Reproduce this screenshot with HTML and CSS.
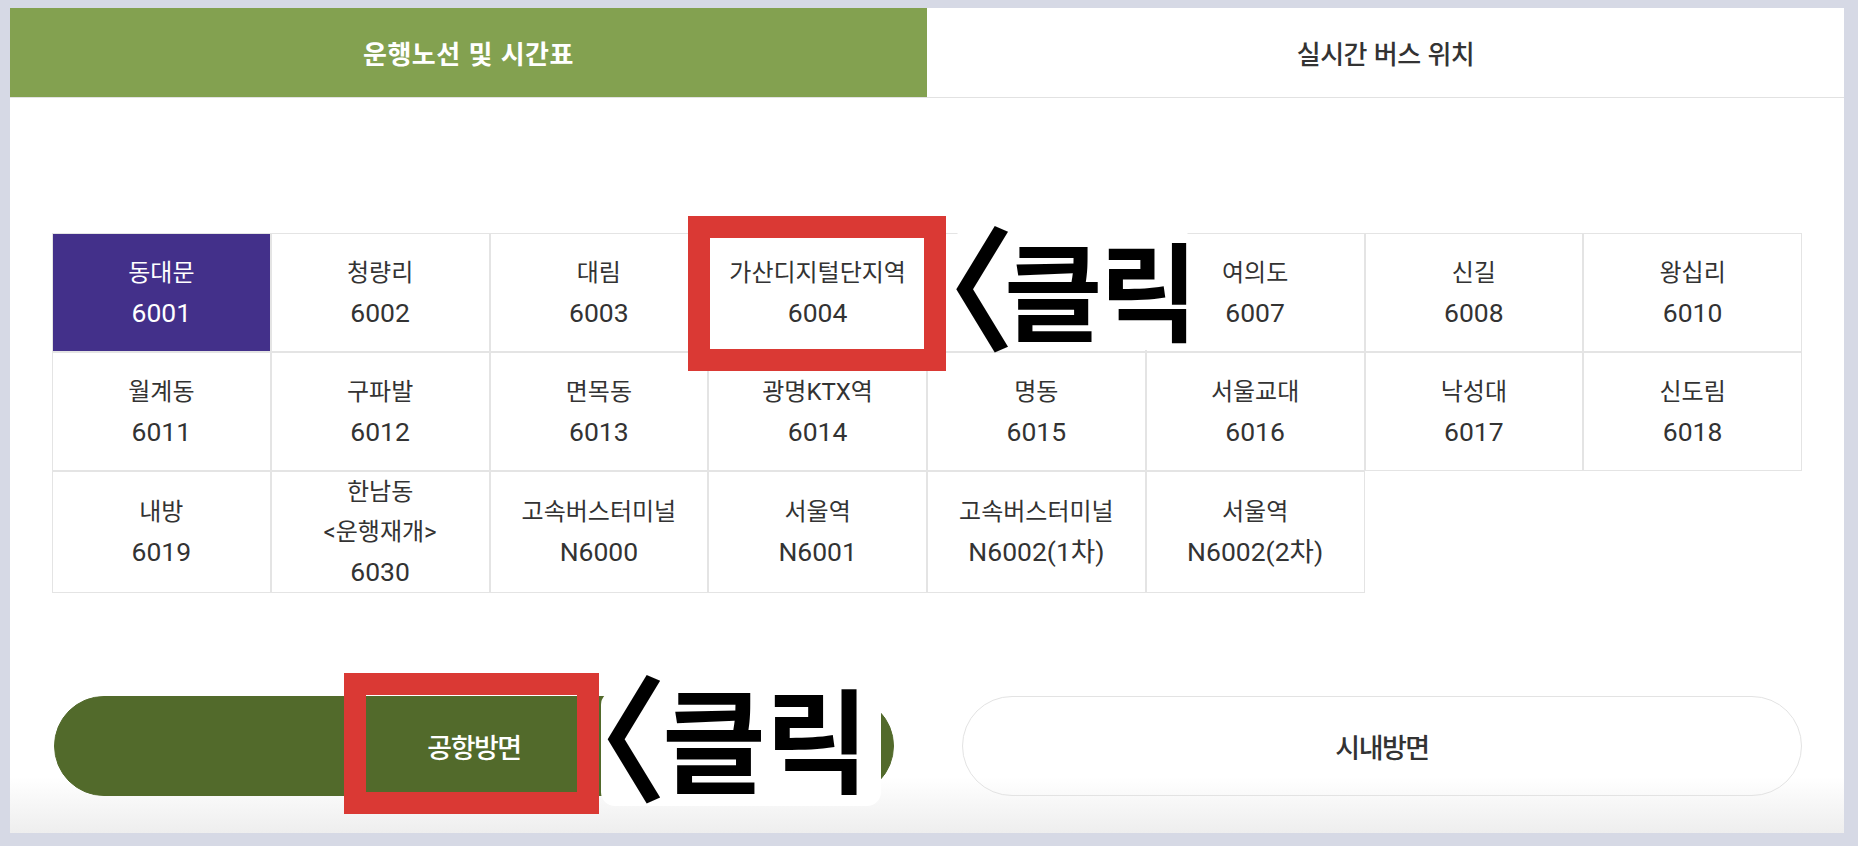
FILE: index.html
```html
<!DOCTYPE html>
<html lang="ko">
<head>
<meta charset="utf-8">
<title>운행노선 및 시간표</title>
<link rel="stylesheet" href="styles.css">
</head>
<body>
<div class="window">
  <div class="tabs">
    <div class="tab active">운행노선 및 시간표</div>
    <div class="tab">실시간 버스 위치</div>
  </div>
  <div class="content">
    <div class="routes">
      <div class="route active"><span class="name">동대문</span><span class="num">6001</span></div>
      <div class="route"><span class="name">청량리</span><span class="num">6002</span></div>
      <div class="route"><span class="name">대림</span><span class="num">6003</span></div>
      <div class="route"><span class="name">가산디지털단지역</span><span class="num">6004</span></div>
      <div class="route"></div>
      <div class="route"><span class="name">여의도</span><span class="num">6007</span></div>
      <div class="route"><span class="name">신길</span><span class="num">6008</span></div>
      <div class="route"><span class="name">왕십리</span><span class="num">6010</span></div>
      <div class="route"><span class="name">월계동</span><span class="num">6011</span></div>
      <div class="route"><span class="name">구파발</span><span class="num">6012</span></div>
      <div class="route"><span class="name">면목동</span><span class="num">6013</span></div>
      <div class="route"><span class="name">광명KTX역</span><span class="num">6014</span></div>
      <div class="route"><span class="name">명동</span><span class="num">6015</span></div>
      <div class="route"><span class="name">서울교대</span><span class="num">6016</span></div>
      <div class="route"><span class="name">낙성대</span><span class="num">6017</span></div>
      <div class="route"><span class="name">신도림</span><span class="num">6018</span></div>
      <div class="route"><span class="name">내방</span><span class="num">6019</span></div>
      <div class="route"><span class="name">한남동</span><span class="name">&lt;운행재개&gt;</span><span class="num">6030</span></div>
      <div class="route"><span class="name">고속버스터미널</span><span class="num">N6000</span></div>
      <div class="route"><span class="name">서울역</span><span class="num">N6001</span></div>
      <div class="route"><span class="name">고속버스터미널</span><span class="num">N6002(1차)</span></div>
      <div class="route"><span class="name">서울역</span><span class="num">N6002(2차)</span></div>
    </div>
    <div class="dirs">
      <div class="dir on">공항방면</div>
      <div class="dir">시내방면</div>
    </div>
  </div>
  <div class="mark mark-1"></div>
  <div class="note note-1"><span class="lt">〈</span>클릭</div>
  <div class="mark mark-2"></div>
  <div class="note note-2"><span class="lt">〈</span>클릭</div>
</div>
</body>
</html>
```
FILE: styles.css
```css
* { box-sizing: border-box; }
html, body { margin: 0; padding: 0; }
html { overflow: hidden; }
body {
  width: 1858px;
  height: 846px;
  padding: 8px 14px 0 10px;
  overflow: hidden;
  background: #d6d9e5;
  font-family: Roboto, "Noto Sans CJK KR", sans-serif;
  color: #333;
}
.window {
  position: relative;
  height: 825px;
  background: linear-gradient(to bottom, #ffffff calc(100% - 56px), #eeeeee 100%);
}
.tabs {
  display: flex;
  height: 90px;
  border-bottom: 1px solid #e2e2e2;
}
.tab {
  flex: 1;
  display: flex;
  align-items: center;
  justify-content: center;
  font-family: "Noto Sans CJK KR", sans-serif;
  font-size: 26px;
  font-weight: 500;
  letter-spacing: -0.5px;
  color: #333;
  background: #fff;
}
.tab.active {
  background: #83a150;
  color: #fff;
  font-weight: 700;
  letter-spacing: 0.5px;
}
.content {
  padding-top: 135px;
}
.routes {
  margin-left: 42px;
  width: 1750px;
  display: grid;
  grid-template-columns: repeat(8, 218.75px);
}
.route {
  min-height: 119px;
  border: 1px solid #e4e4e4;
  display: flex;
  flex-direction: column;
  align-items: center;
  justify-content: center;
  text-align: center;
  line-height: 40px;
  background: #fff;
}
.route .name {
  font-size: 24px;
}
.route .num {
  font-size: 26.5px;
}
.route.active {
  background: #43308a;
  color: #fff;
}
.dirs {
  display: flex;
  gap: 68px;
  margin-top: 103px;
  padding-left: 44px;
}
.dir {
  width: 840px;
  height: 100px;
  border-radius: 50px;
  border: 1px solid #e3e3e3;
  display: flex;
  align-items: center;
  justify-content: center;
  font-family: "Noto Sans CJK KR", sans-serif;
  font-size: 27px;
  font-weight: 500;
  letter-spacing: -1.5px;
  color: #333;
}
.dir.on {
  background: #526a2b;
  border-color: #526a2b;
  color: #fff;
}
.mark {
  position: absolute;
  border: 22px solid #da3934;
}
.mark-1 { left: 678px; top: 208px; width: 258px; height: 155px; }
.mark-2 { left: 334px; top: 665px; width: 255px; height: 141px; }
.note {
  position: absolute;
  background: #fff;
  color: #000;
  font-family: "Noto Sans CJK KR", sans-serif;
  font-weight: 700;
  white-space: nowrap;
}
.note .lt {
  font-weight: 700;
  line-height: 0;
  vertical-align: -7px;
  font-feature-settings: "palt" 1;
}
.note-1 {
  left: 945px; top: 218px; width: 235px; height: 124px;
  border-radius: 16px;
  padding: 6px 0 0 0;
  font-size: 107px;
  line-height: 110px;
  letter-spacing: -3px;
}
.note-1 .lt { font-size: 134px; margin-left: -12px; letter-spacing: -6px; }
.note-2 {
  left: 591px; top: 683px; width: 280px; height: 115px;
  border-radius: 14px;
  padding: 0;
  font-size: 113px;
  line-height: 88px;
  letter-spacing: -1px;
}
.note-2 .lt { font-size: 136px; margin-left: -7px; letter-spacing: 0; }
```
